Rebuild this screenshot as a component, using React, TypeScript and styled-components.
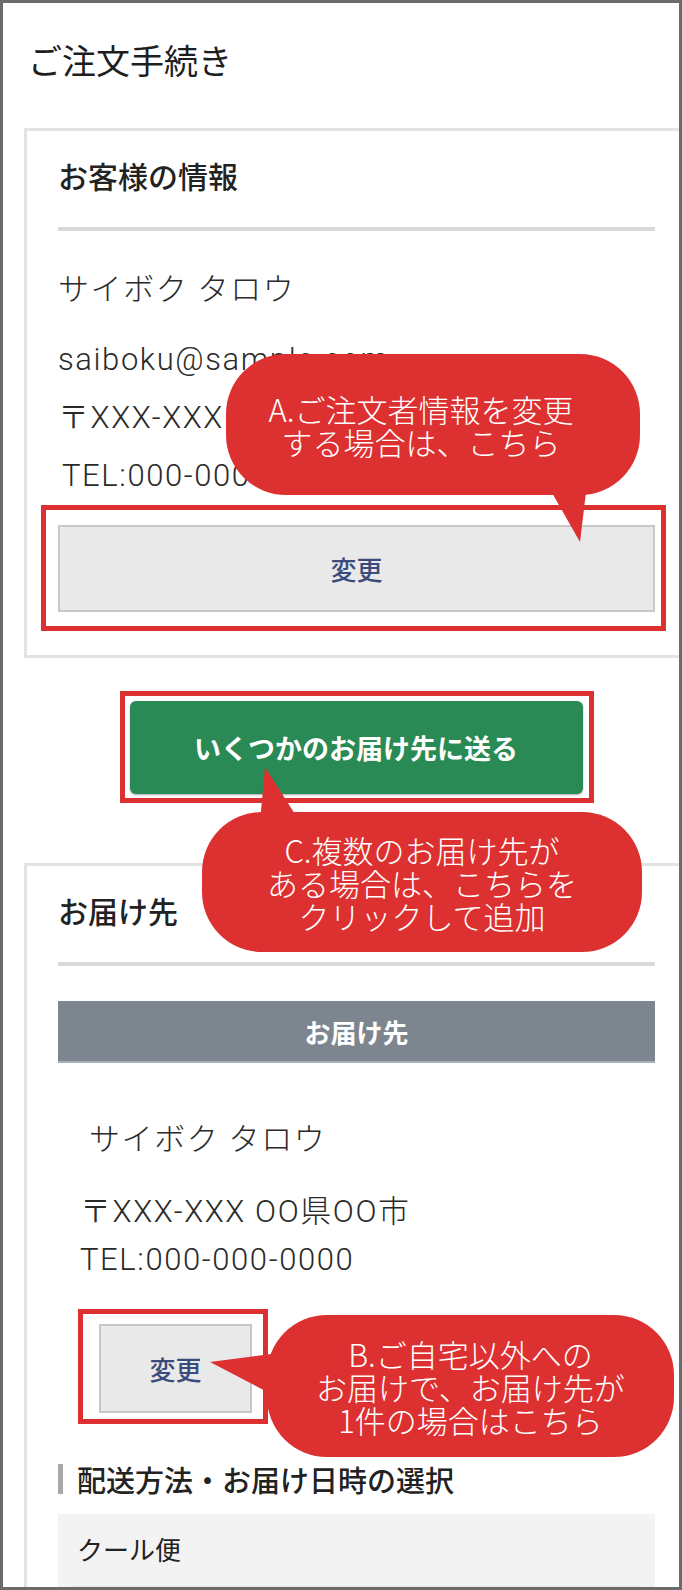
import React from "react";
import styled, { createGlobalStyle } from "styled-components";

const Global = createGlobalStyle`
  html, body { margin: 0; padding: 0; background: #fff; }
  * { box-sizing: border-box; }
`;

const JP = `"Noto Sans CJK JP", "Noto Sans", sans-serif`;
const INFO = `Roboto, "Noto Sans CJK JP", sans-serif`;
const RED = "#dd3131";

const Frame = styled.div`
  position: relative;
  width: 682px;
  height: 1590px;
  border: 3px solid #6b6b6b;
  overflow: hidden;
  background: #fff;
  font-family: ${JP};
  color: #222;
`;

const Title = styled.h1`
  margin: 37px 0 0 25px;
  font-size: 34px;
  line-height: 40px;
  font-weight: 400;
  color: #1e1e1e;
`;

const Card = styled.section<{ $top: number }>`
  margin: ${(p) => p.$top}px 0 0 21px;
  border: 3px solid #e3e3e3;
  border-right: none;
  padding: 26px 24px 24px 31px;
`;

const Heading = styled.h2`
  margin: 0;
  font-size: 30px;
  line-height: 36px;
  font-weight: 500;
  color: #222;
`;

const Divider = styled.div`
  margin-top: 34px;
  height: 4px;
  background: #d9d9d9;
`;

const InfoList = styled.div<{ $top: number; $inset: number }>`
  margin-top: ${(p) => p.$top}px;
  padding-left: ${(p) => p.$inset}px;
  display: flex;
  flex-direction: column;
`;

const InfoLine = styled.div<{ $h: number; $after?: number; $indent?: number }>`
  font-family: ${INFO};
  font-weight: 300;
  font-size: 31px;
  letter-spacing: 1.6px;
  line-height: ${(p) => p.$h}px;
  height: ${(p) => p.$h}px;
  margin-bottom: ${(p) => p.$after ?? 0}px;
  padding-left: ${(p) => p.$indent ?? 0}px;
  color: #2a2a2a;
  white-space: nowrap;
`;

const Highlight = styled.div<{ $m: string; $p: string; $inline?: boolean }>`
  display: ${(p) => (p.$inline ? "inline-flex" : "flex")};
  margin: ${(p) => p.$m};
  padding: ${(p) => p.$p};
  border: 5px solid ${RED};
`;

const GreyButton = styled.button<{ $w?: number; $h: number }>`
  flex: ${(p) => (p.$w ? "none" : "1")};
  width: ${(p) => (p.$w ? `${p.$w}px` : "auto")};
  height: ${(p) => p.$h}px;
  background: #e9e9e9;
  border: 2px solid #c8c8c8;
  font-family: ${JP};
  font-size: 26px;
  font-weight: 500;
  color: #3b4c7c;
  padding: 0;
  cursor: pointer;
`;

const MultiRow = styled.div`
  margin: 33px 24px 0 55px;
  display: flex;
  justify-content: center;
`;

const GreenButton = styled.button`
  width: 453px;
  height: 93px;
  background: #2a8a55;
  border: none;
  border-radius: 6px;
  box-shadow: 0 1px 2px rgba(0, 0, 0, 0.35);
  color: #fff;
  font-family: ${JP};
  font-size: 27px;
  font-weight: 700;
  cursor: pointer;
`;

const GreyBar = styled.div`
  margin-top: 35px;
  height: 62px;
  background: #7d868f;
  border-bottom: 2px solid #a9b1b8;
  display: flex;
  align-items: center;
  justify-content: center;
  color: #fff;
  font-size: 26px;
  font-weight: 700;
`;

const SectionHeading = styled.h3`
  margin: 37px 0 0;
  display: flex;
  align-items: center;
  font-size: 29px;
  line-height: 36px;
  font-weight: 500;
  color: #222;
  &::before {
    content: "";
    width: 5px;
    height: 30px;
    background: #a8a8a8;
    margin-right: 14px;
    flex: none;
  }
`;

const ShipBox = styled.div`
  margin-top: 17px;
  background: #f3f3f3;
  padding: 18px 14px 0;
`;

const ShipName = styled.div`
  padding-left: 5px;
  font-size: 26px;
  line-height: 34px;
  color: #222;
`;

const ShipField = styled.div`
  margin-top: 20px;
  height: 30px;
  background: #e7e7e7;
`;

const Callout = styled.div<{ $x: number; $y: number; $w: number; $h: number; $pr?: number }>`
  position: absolute;
  left: ${(p) => p.$x}px;
  top: ${(p) => p.$y}px;
  width: ${(p) => p.$w}px;
  height: ${(p) => p.$h}px;
  background: ${RED};
  border-radius: 60px;
  padding-right: ${(p) => p.$pr ?? 0}px;
  display: flex;
  flex-direction: column;
  align-items: center;
  justify-content: center;
  color: #fff;
  font-size: 31px;
  font-weight: 300;
  line-height: 33px;
  text-align: center;
  z-index: 2;
`;

const Tail = styled.svg`
  position: absolute;
  left: 0;
  top: 0;
  width: 100%;
  height: 100%;
  overflow: visible;
  pointer-events: none;
`;

const CalloutText = styled.span`
  position: relative;
  white-space: nowrap;
`;

type CalloutProps = {
  x: number;
  y: number;
  w: number;
  h: number;
  pr?: number;
  tail: string;
  lines: string[];
};

function Bubble({ x, y, w, h, pr, tail, lines }: CalloutProps) {
  return (
    <Callout $x={x} $y={y} $w={w} $h={h} $pr={pr}>
      <Tail>
        <polygon points={tail} fill={RED} />
      </Tail>
      {lines.map((l) => (
        <CalloutText key={l}>{l}</CalloutText>
      ))}
    </Callout>
  );
}

export default function App() {
  return (
    <>
      <Global />
      <Frame>
        <Title>ご注文手続き</Title>

        <Card $top={48}>
          <Heading>お客様の情報</Heading>
          <Divider />
          <InfoList $top={30} $inset={0}>
            <InfoLine $h={58} $after={12}>サイボク タロウ</InfoLine>
            <InfoLine $h={58}>saiboku@sample.com</InfoLine>
            <InfoLine $h={58}>〒XXX-XXX OO県OO市</InfoLine>
            <InfoLine $h={58} $indent={4}>TEL:000-000-0000</InfoLine>
          </InfoList>
          <Highlight $m="0 -11px 0 -17px" $p="15px 6px 14px 12px">
            <GreyButton $h={87}>変更</GreyButton>
          </Highlight>
        </Card>

        <MultiRow>
          <Highlight $inline $m="0" $p="5px 6px 4px 5px">
            <GreenButton>いくつかのお届け先に送る</GreenButton>
          </Highlight>
        </MultiRow>

        <Card $top={60}>
          <Heading>お届け先</Heading>
          <Divider />
          <GreyBar>お届け先</GreyBar>
          <InfoList $top={53} $inset={22}>
            <InfoLine $h={48} $after={24} $indent={9}>サイボク タロウ</InfoLine>
            <InfoLine $h={48}>〒XXX-XXX OO県OO市</InfoLine>
            <InfoLine $h={48}>TEL:000-000-0000</InfoLine>
          </InfoList>
          <Highlight $inline $m="25px 0 0 20px" $p="10px 11px 6px 16px">
            <GreyButton $w={153} $h={89}>変更</GreyButton>
          </Highlight>
          <SectionHeading>配送方法・お届け日時の選択</SectionHeading>
          <ShipBox>
            <ShipName>クール便</ShipName>
            <ShipField />
          </ShipBox>
        </Card>

        <Bubble
          x={223}
          y={351}
          w={414}
          h={141}
          pr={24}
          tail="321,130 361,130 354,188"
          lines={["A.ご注文者情報を変更", "する場合は、こちら"]}
        />
        <Bubble
          x={199}
          y={809}
          w={440}
          h={140}
          tail="58,10 98,10 63,-45"
          lines={["C.複数のお届け先が", "ある場合は、こちらを", "クリックして追加"]}
        />
        <Bubble
          x={264}
          y={1312}
          w={407}
          h={142}
          tail="-57,47 12,38 30,60 6,80"
          lines={["B.ご自宅以外への", "お届けで、お届け先が", "1件の場合はこちら"]}
        />
      </Frame>
    </>
  );
}
